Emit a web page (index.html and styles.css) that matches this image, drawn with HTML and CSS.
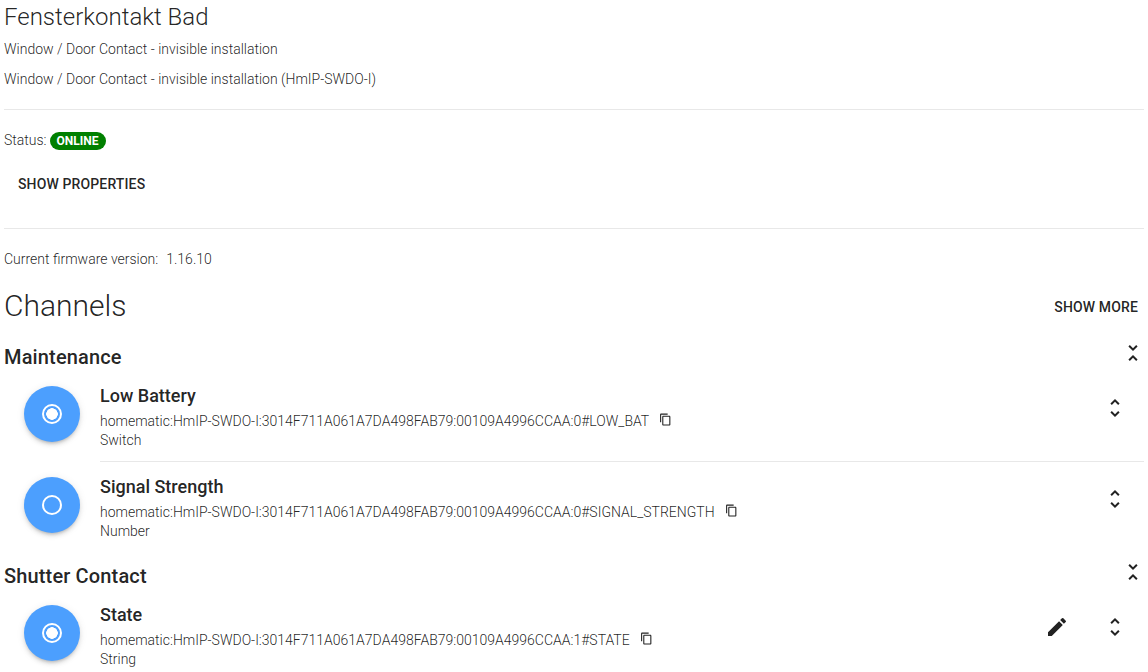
FILE: index.html
```html
<!DOCTYPE html>
<html lang="en">
<head>
    <meta charset="UTF-8">
    <meta name="viewport" content="width=device-width, initial-scale=1.0">
    <title>Fensterkontakt Bad</title>
    <link rel="stylesheet" href="styles.css">
</head>
<body>
    <svg class="icon-defs" width="0" height="0" aria-hidden="true">
        <symbol id="icon-unfold-more" viewBox="0 0 24 24"><path d="M12 5.83 15.17 9l1.41-1.41L12 3 7.41 7.59 8.83 9 12 5.83zm0 12.34L8.83 15l-1.41 1.41L12 21l4.59-4.59L15.17 15 12 18.17z"/></symbol>
        <symbol id="icon-unfold-less" viewBox="0 0 24 24"><path d="M7.41 18.59 8.83 20 12 16.83 15.17 20l1.41-1.41L12 14l-4.59 4.59zm9.18-13.18L15.17 4 12 7.17 8.83 4 7.41 5.41 12 10l4.59-4.59z"/></symbol>
        <symbol id="icon-copy" viewBox="0 0 24 24"><path d="M16 1H4c-1.1 0-2 .9-2 2v14h2V3h12V1zm3 4H8c-1.1 0-2 .9-2 2v14c0 1.1.9 2 2 2h11c1.1 0 2-.9 2-2V7c0-1.1-.9-2-2-2zm0 16H8V7h11v14z"/></symbol>
        <symbol id="icon-edit" viewBox="0 0 24 24"><path d="M3 17.25V21h3.75L17.81 9.94l-3.75-3.75L3 17.25zM20.71 7.04a1 1 0 0 0 0-1.41l-2.34-2.34a1 1 0 0 0-1.41 0l-1.83 1.83 3.75 3.75 1.83-1.83z"/></symbol>
    </svg>

    <div class="page">
        <header class="thing-head">
            <h1>Fensterkontakt Bad</h1>
            <p class="sub first">Window / Door Contact - invisible installation</p>
            <p class="sub">Window / Door Contact - invisible installation (HmIP-SWDO-I)</p>
        </header>

        <section class="thing-status">
            <div class="status-line">Status: <span class="badge">ONLINE</span></div>
            <button class="btn props-btn">SHOW PROPERTIES</button>
        </section>

        <section class="firmware">
            <span>Current firmware version:</span><span class="fw-num">1.16.10</span>
        </section>

        <div class="channels-head">
            <h2>Channels</h2>
            <button class="btn more-btn">SHOW MORE</button>
        </div>

        <div class="group-head">
            <h3>Maintenance</h3>
            <svg class="group-toggle"><use href="#icon-unfold-less"/></svg>
        </div>
        <div class="channel">
            <div class="avatar"><span class="dot dot-on"></span></div>
            <div class="channel-body">
                <div class="channel-name">Low Battery</div>
                <div class="channel-uid">homematic:HmIP-SWDO-I:3014F711A061A7DA498FAB79:00109A4996CCAA:0#LOW_BAT<svg class="copy"><use href="#icon-copy"/></svg></div>
                <div class="channel-type">Switch</div>
            </div>
            <svg class="unfold"><use href="#icon-unfold-more"/></svg>
        </div>
        <div class="channel last">
            <div class="avatar"><span class="dot"></span></div>
            <div class="channel-body">
                <div class="channel-name">Signal Strength</div>
                <div class="channel-uid">homematic:HmIP-SWDO-I:3014F711A061A7DA498FAB79:00109A4996CCAA:0#SIGNAL_STRENGTH<svg class="copy"><use href="#icon-copy"/></svg></div>
                <div class="channel-type">Number</div>
            </div>
            <svg class="unfold"><use href="#icon-unfold-more"/></svg>
        </div>

        <div class="group-head">
            <h3>Shutter Contact</h3>
            <svg class="group-toggle"><use href="#icon-unfold-less"/></svg>
        </div>
        <div class="channel last">
            <div class="avatar"><span class="dot dot-on"></span></div>
            <div class="channel-body">
                <div class="channel-name">State</div>
                <div class="channel-uid">homematic:HmIP-SWDO-I:3014F711A061A7DA498FAB79:00109A4996CCAA:1#STATE<svg class="copy"><use href="#icon-copy"/></svg></div>
                <div class="channel-type">String</div>
            </div>
            <svg class="edit"><use href="#icon-edit"/></svg>
            <svg class="unfold"><use href="#icon-unfold-more"/></svg>
        </div>
    </div>
</body>
</html>
```

FILE: styles.css
```css
html, body {
    margin: 0;
    height: 672px;
    overflow: hidden;
    background: #fff;
}
body {
    font-family: Roboto, "Liberation Sans", sans-serif;
    font-size: 14px;
    color: rgba(0, 0, 0, 0.87);
}
.icon-defs {
    display: block;
}
.page {
    padding: 0 4px;
}
h1, h2, h3, p {
    margin: 0;
    font-weight: normal;
}

.thing-head {
    height: 109px;
    border-bottom: 1px solid #e8e8e8;
}
.thing-head h1 {
    padding-top: 3px;
    font-size: 24px;
    font-weight: 300;
    line-height: 28px;
}
.sub {
    font-size: 14px;
    line-height: 20px;
    font-weight: 300;
    margin-top: 10px;
}
.sub.first {
    margin-top: 8px;
}

.thing-status {
    height: 118px;
    border-bottom: 1px solid #e8e8e8;
}
.status-line {
    display: flex;
    align-items: center;
    gap: 3px;
    height: 20px;
    padding-top: 20px;
    font-weight: 300;
}
.badge {
    margin-top: 2px;
    background: #008000;
    color: #fff;
    font-size: 12px;
    font-weight: 700;
    line-height: 18px;
    padding: 0 7px;
    border-radius: 9px;
}
.btn {
    border: 0;
    background: none;
    padding: 0;
    font-family: inherit;
    font-size: 14px;
    font-weight: 500;
    line-height: 20px;
    letter-spacing: 0.13px;
    color: rgba(0, 0, 0, 0.87);
}
.props-btn {
    display: block;
    margin: 24px 0 0 14px;
}

.firmware {
    display: flex;
    gap: 8px;
    padding-top: 20px;
    line-height: 20px;
    font-weight: 300;
}

.channels-head {
    display: flex;
    justify-content: space-between;
    align-items: flex-start;
    padding: 15px 6px 0 0;
    height: 50px;
}
.channels-head h2 {
    font-size: 30px;
    font-weight: 300;
    line-height: 44px;
}
.more-btn {
    margin-top: 13px;
}

.group-head {
    display: flex;
    justify-content: space-between;
    align-items: center;
    height: 28px;
    padding-top: 9px;
}
.group-head h3 {
    font-size: 20px;
    font-weight: 500;
    line-height: 28px;
    letter-spacing: 0.15px;
}
.group-toggle {
    width: 24px;
    height: 24px;
    fill: #222;
    margin: 0 -1px 8px 0;
}

.channel {
    display: flex;
    align-items: center;
    height: 91px;
    padding-left: 20px;
    position: relative;
}
.channel::after {
    content: "";
    position: absolute;
    left: 96px;
    right: 0;
    bottom: 0;
    height: 1px;
    background: #e8e8e8;
}
.channel.last::after {
    display: none;
}
.avatar {
    width: 56px;
    height: 56px;
    flex: none;
    display: flex;
    align-items: center;
    justify-content: center;
    margin-bottom: 6px;
    border-radius: 50%;
    background: #4c9ffe;
    box-shadow: 0 3px 3px -2px rgba(0, 0, 0, 0.16), 0 3px 4px 0 rgba(0, 0, 0, 0.1), 0 1px 8px 0 rgba(0, 0, 0, 0.08);
}
.dot {
    width: 20px;
    height: 20px;
    box-sizing: border-box;
    border: 2px solid #fff;
    border-radius: 50%;
}
.dot-on {
    background: radial-gradient(circle, #fff 0, #fff 5.5px, transparent 6px);
}
.channel-body {
    flex: 1;
    padding-left: 20px;
}
.channel-name {
    font-size: 18px;
    font-weight: 500;
    line-height: 24px;
}
.channel-uid {
    display: flex;
    align-items: center;
    font-size: 14px;
    font-weight: 300;
    line-height: 20px;
    margin-top: 3px;
    margin-bottom: -1px;
}
.channel-type {
    font-size: 14px;
    font-weight: 300;
    line-height: 20px;
}
.copy {
    width: 13px;
    height: 13px;
    margin: 0 0 2px 10px;
    fill: #222;
}
.unfold {
    width: 24px;
    height: 24px;
    fill: #222;
    margin: 0 17px 18px 0;
}
.edit {
    width: 24px;
    height: 24px;
    fill: #222;
    margin: 0 34px 18px 0;
}
```
